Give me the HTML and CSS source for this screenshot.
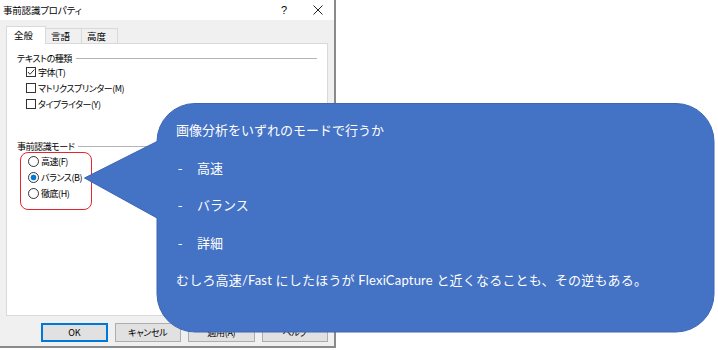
FILE: index.html
```html
<!DOCTYPE html>
<html lang="ja">

<head>
    <meta charset="UTF-8">
    <title>事前認識プロパティ</title>
    <link rel="stylesheet" href="styles.css">
</head>

<body>
    <div class="dialog">
        <div class="titlebar">
            <span class="title">事前認識プロパティ</span>
            <span class="help">?</span>
            <svg class="close" width="10" height="10" viewBox="0 0 10 10">
                <path d="M0.5 0.5 L9.5 9.5 M9.5 0.5 L0.5 9.5" stroke="#222" stroke-width="1" fill="none" />
            </svg>
        </div>
        <div class="dlg-body">
            <div class="tabs">
                <div class="tab active">全般</div>
                <div class="tab">言語</div>
                <div class="tab">高度</div>
            </div>
            <div class="panel">
                <div class="group-title">テキストの種類</div>
                <div class="check">
                    <svg width="10" height="10" viewBox="0 0 10 10">
                        <rect x="0.5" y="0.5" width="9" height="9" fill="#fff" stroke="#333" />
                        <path d="M2 5 L4 7.3 L8.3 2.6" stroke="#333" stroke-width="1" fill="none" />
                    </svg>字体(T)
                </div>
                <div class="check">
                    <svg width="10" height="10" viewBox="0 0 10 10">
                        <rect x="0.5" y="0.5" width="9" height="9" fill="#fff" stroke="#333" />
                    </svg>マトリクスプリンター(M)
                </div>
                <div class="check">
                    <svg width="10" height="10" viewBox="0 0 10 10">
                        <rect x="0.5" y="0.5" width="9" height="9" fill="#fff" stroke="#333" />
                    </svg>タイプライター(Y)
                </div>

                <div class="group-title mode">事前認識モード</div>
                <div class="highlight">
                    <div class="radio"><span class="circle"></span>高速(F)</div>
                    <div class="radio"><span class="circle on"></span>バランス(B)</div>
                    <div class="radio"><span class="circle"></span>徹底(H)</div>
                </div>
            </div>
            <div class="buttons">
                <button class="default">OK</button>
                <button>キャンセル</button>
                <button>適用(A)</button>
                <button>ヘルプ</button>
            </div>
        </div>
    </div>

    <div class="callout">
        <svg class="bubble" width="631" height="230" viewBox="0 0 631 230">
            <path d="M111 0.5 H592 A38 38 0 0 1 630 38.5 V191 A38 38 0 0 1 592 229 H111 A38 38 0 0 1 73 191 V115 L0.5 75 L73 38.5 A38 38 0 0 1 111 0.5 Z"
                fill="#4472c4" stroke="#3c66b3" stroke-width="1" />
        </svg>
        <div class="callout-text">
            <p>画像分析をいずれのモードで行うか</p>
            <p><span class="dash">-</span>高速</p>
            <p><span class="dash">-</span>バランス</p>
            <p><span class="dash">-</span>詳細</p>
            <p class="wide">むしろ高速/Fast にしたほうが FlexiCapture と近くなることも、その逆もある。</p>
        </div>
    </div>
</body>

</html>
```

FILE: styles.css
```css
* {
    margin: 0;
    padding: 0;
    box-sizing: border-box;
}

body {
    background: #fff;
    color: #000;
    font-family: "Noto Sans CJK JP", "Noto Sans", sans-serif;
    position: relative;
    width: 718px;
    height: 350px;
    overflow: hidden;
}

.dialog {
    width: 336px;
    height: 348px;
    border-right: 2px solid #8a8a8a;
    border-bottom: 2px solid #8a8a8a;
    background: #f0f0f0;
    font-size: 9px;
    font-feature-settings: "palt";
}

.titlebar {
    height: 20px;
    background: #fff;
    display: flex;
    align-items: center;
    padding-left: 3px;
}

.title {
    font-size: 9.5px;
    letter-spacing: -0.2px;
}

.help {
    margin-left: auto;
    width: 10px;
    text-align: center;
    font-family: "Liberation Sans", sans-serif;
    font-size: 11px;
    margin-right: 24px;
}

.close {
    margin-right: 11px;
}

.dlg-body {
    padding: 6px 6px 4px 6px;
}

.tabs {
    height: 17px;
    display: flex;
    align-items: flex-end;
    font-size: 9.5px;
}

.tab {
    width: 36px;
    height: 15px;
    line-height: 14px;
    padding-left: 5px;
    border: 1px solid #d9d9d9;
    border-bottom: none;
    background: #f0f0f0;
}

.tab.active {
    width: 40px;
    height: 18px;
    padding-left: 7px;
    line-height: 16px;
    background: #fff;
    margin-bottom: -1px;
    position: relative;
    z-index: 1;
}

.tab + .tab {
    border-left: none;
}

.panel {
    height: 273px;
    background: #fff;
    border: 1px solid #d9d9d9;
    padding: 9px 10px 0 10px;
    letter-spacing: -0.45px;
}

.group-title {
    height: 11px;
    line-height: 11px;
    display: flex;
    align-items: center;
}

.group-title:after {
    content: "";
    flex: 1;
    height: 1px;
    background: #b4b4b4;
    margin-left: 4px;
}

.group-title.mode {
    margin-top: 29px;
}

.check {
    height: 16px;
    display: flex;
    align-items: center;
    margin-left: 9px;
}

.check svg {
    margin-right: 2px;
}

.highlight {
    width: 72px;
    height: 58px;
    margin-left: 3px;
    border: 1px solid #e8242c;
    border-radius: 8px;
    padding-left: 7px;
}

.radio {
    height: 16px;
    display: flex;
    align-items: center;
}

.circle {
    width: 11px;
    height: 11px;
    border: 1px solid #333;
    border-radius: 50%;
    margin-right: 2px;
    background: #fff;
}

.circle.on {
    background: radial-gradient(circle, #0078d7 2.6px, #fff 3.2px);
}

.buttons {
    margin-top: 7px;
    padding-left: 35px;
    display: flex;
    gap: 7px;
}

.buttons button {
    width: 67px;
    height: 19px;
    font-family: "Noto Sans CJK JP", sans-serif;
    font-size: 9px;
    letter-spacing: -0.3px;
    font-feature-settings: "palt";
    background: #e1e1e1;
    border: 1px solid #adadad;
    color: #000;
}

.buttons button.default {
    border: 2px solid #0078d7;
}

.callout {
    position: absolute;
    left: 84px;
    top: 103px;
    width: 631px;
    height: 230px;
}

.bubble {
    position: absolute;
    left: 0;
    top: 0;
}

.callout-text {
    position: relative;
    padding: 9px 0 0 92px;
    color: #fff;
    font-family: "Lato", "Noto Sans CJK JP", sans-serif;
    font-size: 13px;
    line-height: 37.5px;
}

.callout-text .wide {
    letter-spacing: 0.2px;
}

.dash {
    display: inline-block;
    width: 19px;
    margin-left: 2px;
    font-family: "Liberation Serif", serif;
}
```
